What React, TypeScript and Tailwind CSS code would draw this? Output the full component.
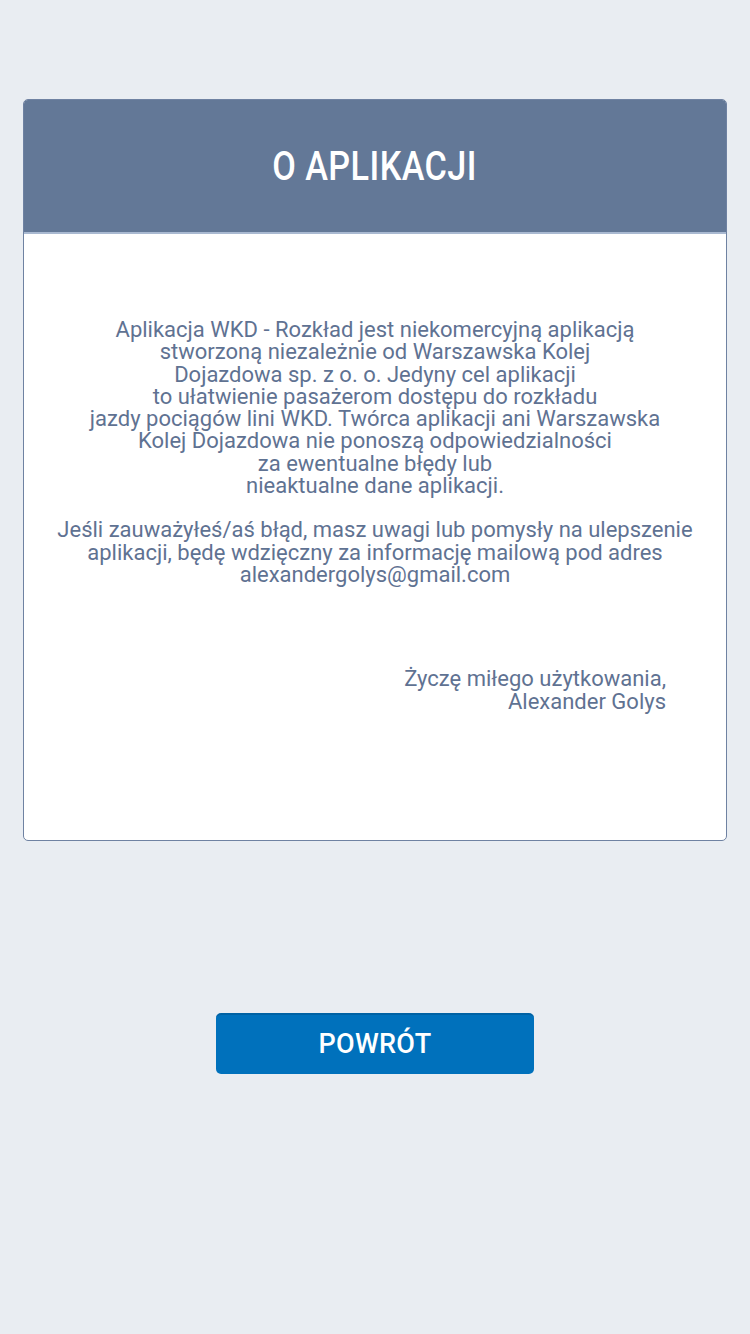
import React from 'react';

const bodyLines = [
  'Aplikacja WKD - Rozkład jest niekomercyjną aplikacją',
  'stworzoną niezależnie od Warszawska Kolej',
  'Dojazdowa sp. z o. o. Jedyny cel aplikacji',
  'to ułatwienie pasażerom dostępu do rozkładu',
  'jazdy pociągów lini WKD. Twórca aplikacji ani Warszawska',
  'Kolej Dojazdowa nie ponoszą odpowiedzialności',
  'za ewentualne błędy lub',
  'nieaktualne dane aplikacji.',
];

const contactLines = [
  'Jeśli zauważyłeś/aś błąd, masz uwagi lub pomysły na ulepszenie',
  'aplikacji, będę wdzięczny za informację mailową pod adres',
  'alexandergolys@gmail.com',
];

const App: React.FC = () => {
  return (
    <div
      className="min-h-[1334px] w-[750px] bg-[#e9edf2] pt-[99px]"
      style={{ fontFamily: 'Roboto, "Noto Sans", sans-serif' }}
    >
      {/* Karta "O aplikacji" */}
      <div className="ml-[23px] w-[704px] h-[742px] rounded-[5px] border border-[#6f82a2] bg-white overflow-hidden flex flex-col">
        <div className="h-[134px] bg-[#637897] border-b-2 border-[#a9b9d1] flex items-center justify-center">
          <h1 className="text-white text-[40px] font-medium leading-none tracking-[0.5px] scale-x-[0.855] mt-[2px]">O APLIKACJI</h1>
        </div>
        <div className="flex-1 pt-[85px] text-[#5f7292] text-[22px] leading-[22.3px]">
          <p className="text-center">
            {bodyLines.map((l, i) => (
              <span key={i} className="block">{l}</span>
            ))}
          </p>
          <p className="text-center mt-[22px]">
            {contactLines.map((l, i) => (
              <span key={i} className="block">{l}</span>
            ))}
          </p>
          <p className="text-right pr-[60px] mt-[82px]">
            <span className="block">Życzę miłego użytkowania,</span>
            <span className="block">Alexander Golys</span>
          </p>
        </div>
      </div>

      <div className="mt-[172px] flex justify-center">
        <button className="w-[318px] h-[61px] rounded-[5px] bg-[#0071bc] border-t-2 border-[#0062a4] text-white text-[27px] font-medium tracking-[0.3px]">
          POWRÓT
        </button>
      </div>
    </div>
  );
};

export default App;
